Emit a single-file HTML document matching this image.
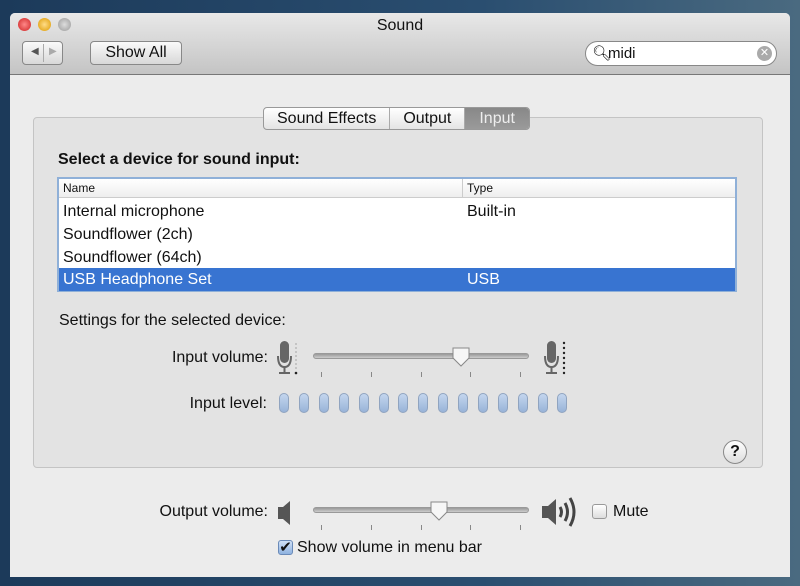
<!DOCTYPE html>
<html><head><style>
*{margin:0;padding:0;box-sizing:border-box}
body{width:800px;height:586px;overflow:hidden;background:linear-gradient(90deg,#1c3a5a,#2a4e70 60%,#4a6a80);font-family:"Liberation Sans",sans-serif;font-size:16px;color:#111;position:relative}
.win{position:absolute;left:10px;top:13px;width:780px;height:564px;background:#ececec;border-radius:5px 5px 0 0;overflow:hidden}
.tb{position:absolute;left:0;top:0;width:780px;height:62px;background:linear-gradient(#e8e8e8,#c4c4c4);border-bottom:1px solid #777}
.a{position:absolute}
.light{position:absolute;top:5px;width:13px;height:13px;border-radius:50%}
.btn{position:absolute;border:1px solid #888;border-radius:4px;background:linear-gradient(#fafafa,#d8d8d8)}
.box{position:absolute;left:23px;top:104px;width:730px;height:351px;border:1px solid #c4c4c4;border-radius:4px;background:#e3e3e3}
.tabs{position:absolute;left:253px;top:94px;height:23px;display:flex;border:1px solid #999;border-radius:4px;overflow:hidden;background:linear-gradient(#fff,#e4e4e4);font-size:16px}
.tabs div{padding:2px 13px 0;border-right:1px solid #aaa}
.tbl{position:absolute;left:47px;top:164px;width:680px;height:115px;border:2px solid #8fb0d8;background:#fff}
.row{position:absolute;left:0;width:676px;height:23px;line-height:23px}
.pill{position:absolute;top:393px;width:10px;height:20px;border-radius:5px;background:linear-gradient(#c4d6ee,#98b3d8);border:1px solid #90a4c0}
.track{position:absolute;height:6px;border-radius:3px;background:linear-gradient(#999,#ccc);border:1px solid #999}
.tick{position:absolute;width:1px;height:5px;background:#888}
.thumb{position:absolute;width:18px;height:20px}
.lbl{position:absolute;right:532px;text-align:right;white-space:nowrap}
</style></head><body>
<div class="win">
<div class="tb">
<div class="light" style="left:8px;background:radial-gradient(#f88,#c22)"></div>
<div class="light" style="left:28px;background:radial-gradient(#fd8,#d90)"></div>
<div class="light" style="left:48px;background:radial-gradient(#ddd,#999)"></div>
<div class="a" style="left:0;width:780px;top:4px;text-align:center;font-size:16px">Sound</div>
<div class="btn" style="left:12px;top:28px;width:41px;height:24px"><span class="a" style="left:8px;top:4px;font-size:10px;color:#555">◀</span><span class="a" style="left:20px;top:2px;width:1px;height:18px;background:#aaa"></span><span class="a" style="left:26px;top:4px;font-size:10px;color:#aaa">▶</span></div>
<div class="btn" style="left:80px;top:28px;width:92px;height:24px;text-align:center;line-height:22px;font-size:16px">Show All</div>
<div class="a" style="left:575px;top:28px;width:192px;height:25px;border:1px solid #888;border-radius:13px;background:#fff"><span class="a" style="left:6px;top:2px;font-size:15px">🔍︎</span><span class="a" style="left:22px;top:3px;font-size:15px">midi</span><span class="a" style="right:4px;top:4px;width:15px;height:15px;border-radius:50%;background:#aaa;color:#fff;font-size:11px;text-align:center;line-height:15px">✕</span></div>
</div>
<div class="box"></div>
<div class="tabs"><div>Sound Effects</div><div>Output</div><div style="background:linear-gradient(#888,#9a9a9a);color:#eee;border:none;padding:2px 14px 0">Input</div></div>
<div class="a" style="left:48px;top:138px;font-weight:bold;font-size:16px">Select a device for sound input:</div>
<div class="tbl">
<div class="row" style="top:0;height:19px;line-height:19px;font-size:12px;border-bottom:1px solid #ccc;background:linear-gradient(#fff,#eee)"><span class="a" style="left:4px">Name</span><span class="a" style="left:403px;border-left:1px solid #ccc;padding-left:4px">Type</span></div>
<div class="row" style="top:21px"><span class="a" style="left:4px">Internal microphone</span><span class="a" style="left:408px">Built-in</span></div>
<div class="row" style="top:44px"><span class="a" style="left:4px">Soundflower (2ch)</span></div>
<div class="row" style="top:67px"><span class="a" style="left:4px">Soundflower (64ch)</span></div>
<div class="row" style="top:89px;background:#3874d1;color:#fff"><span class="a" style="left:4px">USB Headphone Set</span><span class="a" style="left:408px">USB</span></div>
</div>
<div class="a" style="left:49px;top:299px">Settings for the selected device:</div>
</div>
<div class="lbl" style="top:349px">Input volume:</div>
<div class="lbl" style="top:395px;right:533px">Input level:</div>
<svg class="a" style="left:276px;top:340px" width="24" height="36"><rect x="4" y="1" width="9" height="22" rx="4.5" fill="#666"/><path d="M2 16 Q2 27 8.5 27 Q15 27 15 16" stroke="#666" stroke-width="2" fill="none"/><rect x="7.5" y="27" width="2" height="5" fill="#666"/><rect x="3" y="32" width="11" height="2" fill="#666"/><g fill="#bbb"><circle cx="20" cy="4" r="1"/><circle cx="20" cy="8" r="1"/><circle cx="20" cy="12" r="1"/><circle cx="20" cy="16" r="1"/><circle cx="20" cy="20" r="1"/><circle cx="20" cy="24" r="1"/><circle cx="20" cy="28" r="1"/></g><circle cx="20" cy="33" r="1.3" fill="#222"/></svg>
<svg class="a" style="left:543px;top:340px" width="26" height="36"><rect x="4" y="1" width="9" height="22" rx="4.5" fill="#666"/><path d="M2 16 Q2 27 8.5 27 Q15 27 15 16" stroke="#666" stroke-width="2" fill="none"/><rect x="7.5" y="27" width="2" height="5" fill="#666"/><rect x="3" y="32" width="11" height="2" fill="#666"/><g fill="#222"><circle cx="21" cy="3" r="1.2"/><circle cx="21" cy="8" r="1.2"/><circle cx="21" cy="13" r="1.2"/><circle cx="21" cy="18" r="1.2"/><circle cx="21" cy="23" r="1.2"/><circle cx="21" cy="28" r="1.2"/><circle cx="21" cy="33" r="1.2"/></g></svg>
<div class="track" style="left:313px;top:353px;width:216px"></div>
<div class="tick" style="left:321px;top:372px"></div><div class="tick" style="left:371px;top:372px"></div><div class="tick" style="left:421px;top:372px"></div><div class="tick" style="left:470px;top:372px"></div><div class="tick" style="left:520px;top:372px"></div>
<svg class="thumb" style="left:452px;top:347px"><path d="M1 1 H17 V11 L9 19 L1 11 Z" fill="#f6f6f6" stroke="#888"/></svg>
<div class="pill" style="left:279px"></div><div class="pill" style="left:299px"></div><div class="pill" style="left:319px"></div><div class="pill" style="left:339px"></div><div class="pill" style="left:359px"></div><div class="pill" style="left:379px"></div><div class="pill" style="left:398px"></div><div class="pill" style="left:418px"></div><div class="pill" style="left:438px"></div><div class="pill" style="left:458px"></div><div class="pill" style="left:478px"></div><div class="pill" style="left:498px"></div><div class="pill" style="left:518px"></div><div class="pill" style="left:538px"></div><div class="pill" style="left:557px"></div>
<div class="a" style="left:723px;top:440px;width:24px;height:24px;border:1px solid #888;border-radius:50%;background:linear-gradient(#fff,#ddd);text-align:center;line-height:22px;font-size:16px;font-weight:bold">?</div>
<div class="lbl" style="top:503px">Output volume:</div>
<svg class="a" style="left:276px;top:499px" width="20" height="28"><path d="M2 8 H7 L14 2 V26 L7 20 H2 Z" fill="#555"/></svg>
<svg class="a" style="left:540px;top:494px" width="42" height="36"><path d="M2 12 H8 L16 5 V31 L8 24 H2 Z" fill="#555"/><path d="M20 13 Q23 18 20 23" stroke="#444" stroke-width="3" fill="none"/><path d="M25 9 Q30 18 25 27" stroke="#444" stroke-width="3" fill="none"/><path d="M30 4 Q38 18 30 32" stroke="#444" stroke-width="3" fill="none"/></svg>
<div class="track" style="left:313px;top:507px;width:216px"></div>
<div class="tick" style="left:321px;top:525px"></div><div class="tick" style="left:371px;top:525px"></div><div class="tick" style="left:421px;top:525px"></div><div class="tick" style="left:470px;top:525px"></div><div class="tick" style="left:520px;top:525px"></div>
<svg class="thumb" style="left:430px;top:501px"><path d="M1 1 H17 V11 L9 19 L1 11 Z" fill="#f6f6f6" stroke="#888"/></svg>
<div class="a" style="left:592px;top:504px;width:15px;height:15px;border:1px solid #999;border-radius:3px;background:linear-gradient(#fff,#ddd)"></div>
<div class="a" style="left:613px;top:503px">Mute</div>
<div class="a" style="left:278px;top:540px;width:15px;height:15px;border:1px solid #6a8ab8;border-radius:3px;background:linear-gradient(#cfe0f6,#8fb2e0);font-size:15px;line-height:13px;text-align:center;color:#111">✔</div>
<div class="a" style="left:297px;top:539px">Show volume in menu bar</div>
</body></html>
